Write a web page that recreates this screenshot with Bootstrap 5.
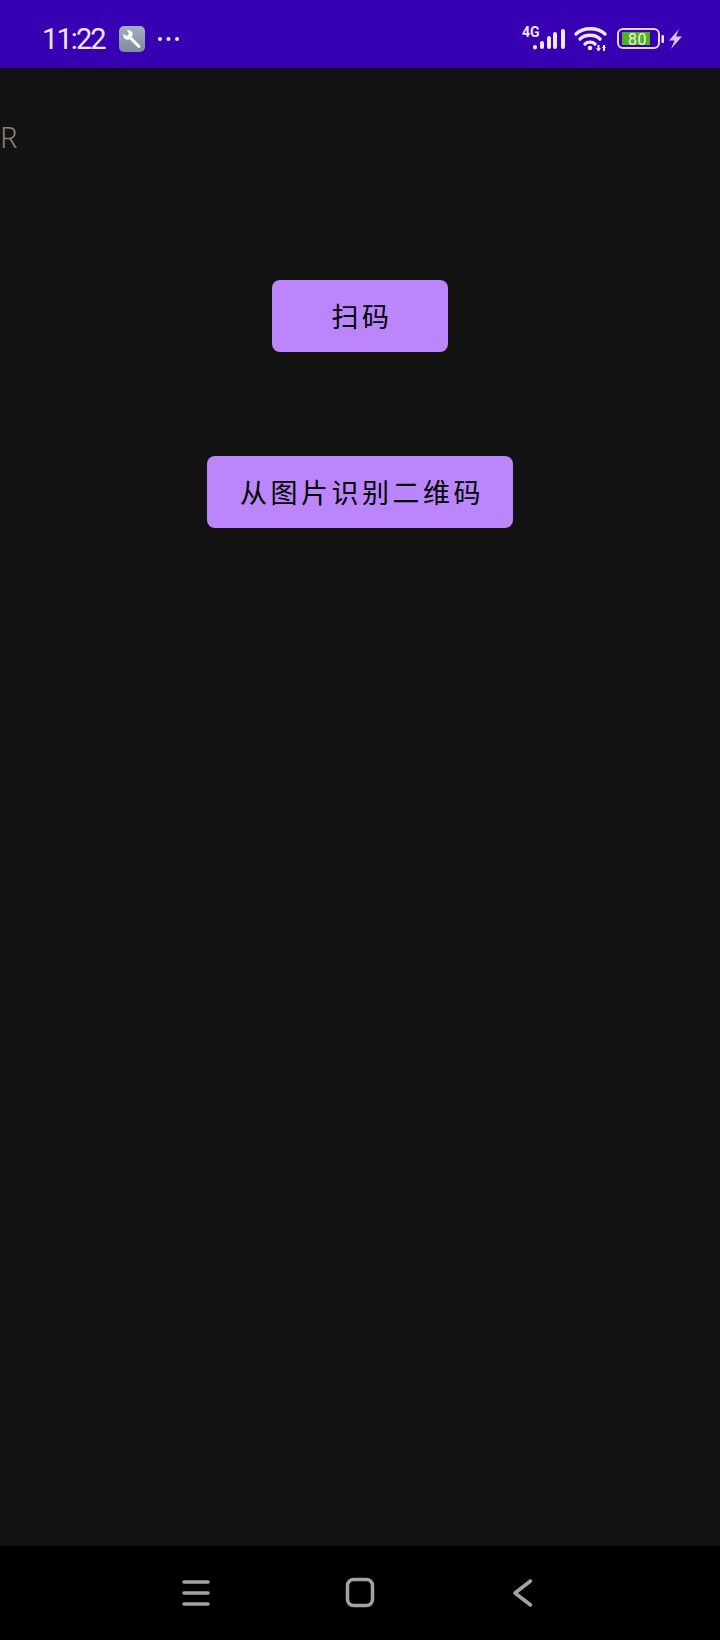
<!DOCTYPE html>
<html lang="zh"><head><meta charset="utf-8"><title>扫码</title>
<link href="https://cdn.jsdelivr.net/npm/bootstrap@5.3.0/dist/css/bootstrap.min.css" rel="stylesheet">
<style>
html,body{height:100%}
body{background:#121212;font-family:Roboto,"Noto Sans CJK SC",sans-serif;overflow:hidden}
.app-shell{height:1640px}
.status-strip{height:68px;background:#3700b3;color:#efe6ff;padding:10px 38px 0 42px}
.clock-text{font-size:29px;font-weight:400;line-height:1;margin-right:14px;letter-spacing:-1.9px}
.tool-icon{margin-right:12px}
.main-area{flex:1;min-height:0}
.tag-r{font-family:"Noto Sans","Noto Sans CJK SC",sans-serif;font-weight:300;font-size:29px;line-height:38px;color:#8b8176;padding-top:50px;height:212px}
.scan-btn{background:#bb86fc;color:#000;font-size:27px;line-height:40px;letter-spacing:3.5px;height:72px;min-width:176px;padding:3px 29px 0 33px;border:0;border-radius:8px;font-family:Roboto,"Noto Sans CJK SC",sans-serif}
.scan-btn:hover{background:#bb86fc;color:#000}
.btn-gap{margin-top:104px}
.nav-strip{height:94px;background:#000}
</style></head><body>
<div class="app-shell d-flex flex-column">
<div class="status-strip d-flex align-items-center">
<span class="clock-text">11:22</span>
<svg class="tool-icon" width="26" height="26" viewBox="0 0 26 26"><defs><linearGradient id="g" x1="0" y1="0" x2="0" y2="1"><stop offset="0" stop-color="#a5afc4"/><stop offset="1" stop-color="#7e8a9b"/></linearGradient></defs><rect width="26" height="26" rx="5" fill="url(#g)"/><path d="M20 20.500 12 12.500" stroke="#fff" stroke-width="3" stroke-linecap="round"/><path d="M4.500 8 8 10l2-2-2-3.500c3-.8 6.500 1.500 5.500 5.500l-3.500 3.500c-3.500 1-6.500-2-5.500-5.500z" fill="#fff"/></svg>
<svg width="23" height="6" viewBox="0 0 23 6"><circle cx="3" cy="3" r="2" fill="#efe6ff"/><circle cx="11.500" cy="3" r="2" fill="#efe6ff"/><circle cx="20" cy="3" r="2" fill="#efe6ff"/></svg>
<svg class="ms-auto" width="160" height="30" viewBox="0 0 160 30" fill="none">
<text x="0" y="13" font-family="Roboto" font-weight="700" font-size="14" fill="#efe6ff">4G</text>
<g stroke="#efe6ff" stroke-width="4" stroke-linecap="round"><path d="M13 23v.5M20 19v4M27 14v9M33 10v13M41 7v16"/></g>
<g stroke="#efe6ff" stroke-width="3.300" stroke-linecap="round"><path d="M54 10C61 3 76 3 83 10"/><path d="M58 15c5-5 15-5 20 0"/><path d="M63 20c2.500-2.500 7.500-2.500 10 0"/></g>
<circle cx="68" cy="24" r="2.300" fill="#efe6ff"/>
<path d="M76.500 21v6M82 21v6" stroke="#efe6ff" stroke-width="2"/><path d="M74 24l2.500 3 2.500-3zM80 24l2 -3 2 3z" fill="#efe6ff"/>
<rect x="96" y="5" width="41" height="19" rx="5" stroke="#e4d6fb" stroke-width="2"/>
<rect x="100" y="8" width="28" height="13" fill="#52b01e"/>
<rect x="139.500" y="11" width="2.500" height="8" rx="1" fill="#efe6ff"/>
<text x="115.500" y="20.500" text-anchor="middle" font-family="Roboto" font-size="16" fill="#eef6e2" letter-spacing=".5">80</text>
<path d="M157 5 147 16.500h5.500L149 25l11-12.500h-6z" fill="#d3c2f2"/>
</svg>
</div>
<div class="main-area">
<div class="tag-r">R</div>
<div class="d-flex flex-column align-items-center">
<button class="btn scan-btn" type="button">扫码</button>
<button class="btn scan-btn btn-gap" type="button">从图片识别二维码</button>
</div>
</div>
<div class="nav-strip d-flex align-items-center">
<svg width="720" height="94" viewBox="0 0 720 94" fill="none" stroke="#a3a3a3"><g stroke-width="3.500" stroke-linecap="round"><path d="M184 36h24M184 47h24M184 58h24"/></g><rect x="347.500" y="33.500" width="25" height="26" rx="6" stroke-width="3.500"/><path d="M530.500 35 515 47l15.500 12" stroke-width="3.500" stroke-linecap="round" stroke-linejoin="round"/></svg>
</div>
</div>
<script src="https://cdn.jsdelivr.net/npm/bootstrap@5.3.0/dist/js/bootstrap.bundle.min.js"></script>
</body></html>
